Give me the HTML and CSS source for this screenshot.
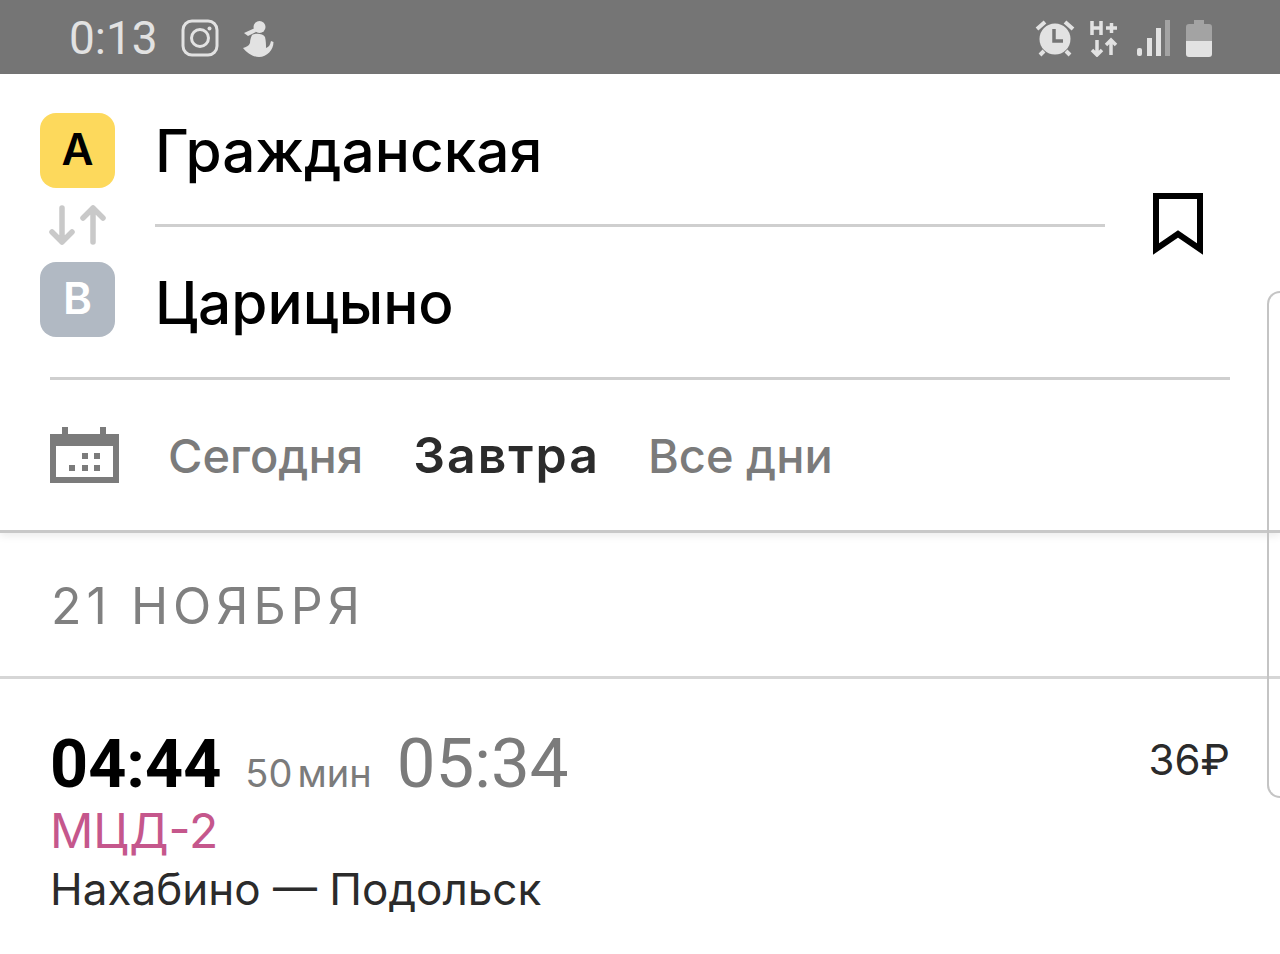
FILE: index.html
```html
<!DOCTYPE html>
<html lang="ru">
<head>
    <meta charset="UTF-8">
    <meta name="viewport" content="width=device-width, initial-scale=1.0">
    <title>Гражданская — Царицыно</title>
    <link rel="stylesheet" href="styles.css">
</head>
<body>
    <div class="status-bar">
        <div class="status-left">
            <span class="status-time">0:13</span>
            <svg class="status-insta" width="38" height="38" viewBox="0 0 38 38" fill="none" stroke="#e2e2e2">
                <rect x="2" y="2" width="34" height="34" rx="9" stroke-width="3"/>
                <circle cx="19" cy="19" r="8.5" stroke-width="3"/>
                <circle cx="28.5" cy="9.5" r="2" fill="#e2e2e2" stroke="none"/>
            </svg>
            <svg class="status-figure" width="31" height="37" viewBox="0 0 31 37" fill="#e2e2e2">
                <circle cx="16.500" cy="7" r="6"/>
                <path d="M12 8 L1 13 L5 16 L13 12 Z"/>
                <path d="M9 15 C12 13 20 13 22 17 C23 21 23 25 23 28 C26 27 27 25 28 21 L30.500 22 C30.500 30 24 37 16 37 C10 37 4 33 0 28 C3 27 6 26 7 23 C7 20 8 17 9 15 Z"/>
            </svg>
        </div>
        <div class="status-right">
            <svg width="40" height="40" viewBox="0 0 40 40">
                <circle cx="20" cy="21" r="15.500" fill="#e2e2e2"/>
                <path d="M19 11 V23 H28" fill="none" stroke="#757575" stroke-width="3.500"/>
                <path d="M2 11 L10 4 M38 11 L30 4 M9 33 L5 37 M31 33 L35 37" stroke="#e2e2e2" stroke-width="4" fill="none"/>
            </svg>
            <svg class="status-net" width="28" height="38" viewBox="0 0 28 38" fill="none" stroke="#e2e2e2" stroke-width="3.500">
                <path d="M2 2 V16 M11 2 V16 M2 9 H11 M16 9 H27 M21.500 4 V14"/>
                <path d="M7 21 V36 M2 31 L7 36 L12 31 M21 36 V21 M16 26 L21 21 L26 26"/>
            </svg>
            <svg width="34" height="38" viewBox="0 0 34 38">
                <rect x="0" y="29" width="5" height="8" rx="2" fill="#e2e2e2"/>
                <rect x="10" y="19" width="5" height="18" fill="#e2e2e2"/>
                <rect x="19" y="9" width="5" height="28" fill="#e2e2e2"/>
                <rect x="28" y="1" width="5" height="36" fill="#a3a3a3"/>
            </svg>
            <svg width="26" height="40" viewBox="0 0 26 40">
                <path d="M8 2 H18 V6 H23 Q26 6 26 9 V25 H0 V9 Q0 6 3 6 H8 Z" fill="#a3a3a3"/>
                <path d="M0 23 H26 V36 Q26 39 23 39 H3 Q0 39 0 36 Z" fill="#e2e2e2"/>
            </svg>
        </div>
    </div>

    <div class="search-head">
        <div class="route">
            <div class="route-points">
                <div class="point point-from">A</div>
                <svg class="swap-icon" width="58" height="42" viewBox="0 0 58 42" fill="none" stroke="#c9c9c9" stroke-width="5.500" stroke-linecap="round" stroke-linejoin="round">
                    <path d="M13 4 V38 M3 28 L13 38 L23 28"/>
                    <path d="M44 38 V4 M34 14 L44 4 L54 14"/>
                </svg>
                <div class="point point-to">B</div>
            </div>
            <div class="route-fields">
                <div class="route-field route-field-first">Гражданская</div>
                <div class="route-field route-field-last">Царицыно</div>
            </div>
            <svg class="bookmark" width="50" height="62" viewBox="0 0 50 62" fill="none" stroke="#000" stroke-width="6">
                <path d="M3 3 H47 V56 L25 41 L3 56 Z"/>
            </svg>
        </div>
        <div class="route-divider"></div>
        <div class="days">
            <svg class="calendar" width="69" height="56" viewBox="0 0 69 56" fill="#7b7b7b">
                <rect x="12" y="0" width="6" height="10"/>
                <rect x="50" y="0" width="6" height="10"/>
                <path fill-rule="evenodd" d="M0 7 H69 V56 H0 Z M6 19 V50 H63 V19 Z"/>
                <rect x="32" y="26" width="6" height="6"/>
                <rect x="44" y="26" width="6" height="6"/>
                <rect x="19" y="38" width="6" height="6"/>
                <rect x="32" y="38" width="6" height="6"/>
                <rect x="44" y="38" width="6" height="6"/>
            </svg>
            <span class="day">Сегодня</span>
            <span class="day day-active">Завтра</span>
            <span class="day">Все дни</span>
        </div>
    </div>

    <div class="date-title">21 НОЯБРЯ</div>

    <div class="trip">
        <div class="trip-times">
            <span class="trip-depart">04:44</span>
            <span class="trip-duration">50<span class="trip-min">мин</span></span>
            <span class="trip-arrive">05:34</span>
            <span class="trip-price">36<span class="rub">₽</span></span>
        </div>
        <div class="trip-line">МЦД-2</div>
        <div class="trip-name">Нахабино — Подольск</div>
    </div>

    <div class="scroll-handle"></div>
</body>
</html>
```

FILE: styles.css
```css
* {
    margin: 0;
    padding: 0;
    box-sizing: border-box;
    font-family: Inter, "Noto Sans", Arial, sans-serif;
}

body {
    position: relative;
    height: 954px;
    overflow: hidden;
    background: #fff;
}

.status-bar {
    display: flex;
    justify-content: space-between;
    align-items: center;
    height: 74px;
    padding: 2px 68px 0 69px;
    background: #757575;
    color: #e2e2e2;
}

.status-left,
.status-right {
    display: flex;
    align-items: center;
}

.status-time {
    font-family: Roboto, sans-serif;
    font-size: 46px;
    width: 112px;
}

.status-figure {
    margin-left: 24px;
}

.status-right {
    gap: 15px;
}

.status-net {
    margin-right: 4px;
}

.search-head {
    height: 459px;
    border-bottom: 3px solid #c8c8c8;
    box-shadow: 0 3px 8px rgba(0, 0, 0, 0.08);
}

.route {
    display: flex;
    height: 303px;
    padding: 39px 0 0 40px;
}

.route-points {
    display: flex;
    flex-direction: column;
    align-items: center;
    width: 75px;
}

.point {
    display: flex;
    align-items: center;
    justify-content: center;
    width: 75px;
    height: 75px;
    padding-bottom: 3px;
    border-radius: 16px;
    font-size: 44px;
    font-weight: 600;
}

.point-from {
    background: #fdd95c;
    color: #000;
}

.point-to {
    background: #b1b9c3;
    color: #fff;
}

.swap-icon {
    margin: 16px 0;
}

.route-fields {
    width: 950px;
    margin-left: 40px;
}

.route-field {
    font-size: 58.500px;
    font-weight: 500;
    line-height: 76px;
    color: #000;
}

.route-field-first {
    height: 114px;
    border-bottom: 3px solid #cfcfcf;
}

.route-field-last {
    padding-top: 38px;
}

.bookmark {
    margin: 80px 0 0 48px;
}

.route-divider {
    height: 3px;
    margin: 0 50px;
    background: #cfcfcf;
}

.days {
    display: flex;
    align-items: center;
    height: 150px;
    padding-left: 50px;
    font-size: 47px;
    font-weight: 500;
    color: #7b7b7b;
}

.calendar {
    margin-right: 49px;
}

.day {
    margin-right: 50px;
}

.day-active {
    margin-right: 48px;
    font-size: 50px;
    font-weight: 600;
    letter-spacing: 2px;
    color: #2b2b2b;
}

.date-title {
    height: 146px;
    padding: 41px 0 0 51px;
    border-bottom: 3px solid #d6d6d6;
    font-size: 50px;
    line-height: 64px;
    letter-spacing: 5px;
    color: #808080;
}

.trip {
    padding: 44px 50px 0;
}

.trip-times {
    display: flex;
    align-items: baseline;
    height: 78px;
}

.trip-depart {
    font-family: Roboto, sans-serif;
    font-size: 66.500px;
    font-weight: 700;
    color: #000;
}

.trip-duration {
    margin-left: 24px;
    font-size: 38px;
    color: #7b7b7b;
}

.trip-min {
    margin-left: 5px;
}

.trip-arrive {
    margin-left: 25px;
    font-family: Roboto, sans-serif;
    font-size: 69px;
    color: #7b7b7b;
}

.trip-price {
    align-self: flex-start;
    margin-left: auto;
    padding-top: 11px;
    font-size: 42px;
    color: #2b2b2b;
}

.trip-line {
    font-size: 48px;
    line-height: 60px;
    color: #c5578c;
}

.trip-name {
    font-size: 44px;
    line-height: 56px;
    color: #2b2b2b;
}

.scroll-handle {
    position: absolute;
    top: 291px;
    right: 0;
    width: 13px;
    height: 507px;
    border: 2px solid #c4c4c4;
    border-right: none;
    border-radius: 16px 0 0 16px;
}
```
